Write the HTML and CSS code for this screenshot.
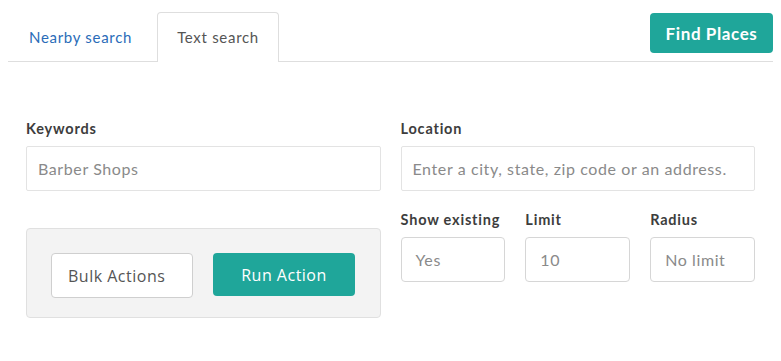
FILE: index.html
```html
<!DOCTYPE html>
<html lang="en">
<head>
<meta charset="utf-8">
<title>Find Places</title>
<link rel="stylesheet" href="styles.css">
</head>
<body>
<div class="page">
  <div class="tabbar">
    <ul class="tabs">
      <li class="tab"><a href="#">Nearby search</a></li>
      <li class="tab active"><a href="#">Text search</a></li>
    </ul>
    <button class="btn-find" type="button">Find Places</button>
  </div>

  <div class="form">
    <div class="col">
      <div class="field">
        <label class="label">Keywords</label>
        <div class="input"><span class="ph">Barber Shops</span></div>
      </div>
      <div class="actions">
        <div class="select">Bulk Actions</div>
        <button class="btn-run" type="button">Run Action</button>
      </div>
    </div>
    <div class="col">
      <div class="field">
        <label class="label">Location</label>
        <div class="input"><span class="ph">Enter a city, state, zip code or an address.</span></div>
      </div>
      <div class="trio">
        <div class="field">
          <label class="label">Show existing</label>
          <div class="input small"><span class="ph">Yes</span></div>
        </div>
        <div class="field">
          <label class="label">Limit</label>
          <div class="input small"><span class="ph">10</span></div>
        </div>
        <div class="field">
          <label class="label">Radius</label>
          <div class="input small"><span class="ph">No limit</span></div>
        </div>
      </div>
    </div>
  </div>
</div>
</body>
</html>
```
FILE: styles.css
```css
* { box-sizing: border-box; }
body {
  margin: 8px;
  background: #fff;
  font-family: Lato, "Noto Sans", sans-serif;
  color: #444;
}
.tabbar {
  display: flex;
  justify-content: space-between;
  align-items: flex-start;
  border-bottom: 1px solid #dedede;
  height: 54px;
  padding-top: 5px;
}
.tabs {
  list-style: none;
  margin: 0;
  padding: 0;
  display: flex;
  align-self: flex-end;
}
.tab a {
  display: block;
  height: 49px;
  padding: 0 20px;
  line-height: 49px;
  font-size: 15px;
  letter-spacing: 0.7px;
  color: #2a6cb8;
  text-decoration: none;
  border: 1px solid transparent;
  border-bottom: none;
  border-radius: 4px 4px 0 0;
}
.tab.active a {
  color: #555;
  border-color: #dedede;
  background: #fff;
  margin-bottom: -1px;
  height: 50px;
  padding: 0 19px;
}
.tab + .tab { margin-left: 4px; }
.btn-find {
  background: #1fa69a;
  color: #fff;
  border: none;
  border-radius: 4px;
  height: 40px;
  width: 123px;
  font-family: inherit;
  font-size: 17px;
  font-weight: 700;
  letter-spacing: 0.6px;
  padding: 0;
}
.form {
  display: grid;
  grid-template-columns: 1fr 1fr;
  column-gap: 20px;
  padding: 57px 18px 0;
}
.col { display: flex; flex-direction: column; }
.field { display: flex; flex-direction: column; }
.label {
  font-size: 14.5px;
  font-weight: 700;
  letter-spacing: 0.8px;
  line-height: 20px;
  color: #3d3d3d;
  margin-bottom: 7px;
}
.input {
  height: 45px;
  border: 1px solid #e3e3e3;
  border-radius: 2px;
  display: flex;
  align-items: center;
  padding: 0 11px;
  font-size: 16px;
  letter-spacing: 0.6px;
  color: #8a8a8a;
  background: #fff;
}
.input.small {
  border-color: #d6d6d6;
  border-radius: 4px;
  padding: 0 14px;
}
.trio {
  margin-top: 19px;
  display: grid;
  grid-template-columns: repeat(3, 1fr);
  column-gap: 20px;
}
.actions {
  margin-top: 37px;
  background: #f3f3f3;
  border: 1px solid #e0e0e0;
  border-radius: 4px;
  display: flex;
  gap: 20px;
  align-items: flex-start;
  padding: 24px 24px 19px;
}
.select {
  width: 142px;
  height: 45px;
  background: #fff;
  border: 1px solid #cfcfcf;
  border-radius: 4px;
  display: flex;
  align-items: center;
  padding: 0 16px;
  font-family: "Open Sans", sans-serif;
  font-size: 16px;
  letter-spacing: 0.5px;
  color: #555;
}
.btn-run {
  width: 142px;
  height: 43px;
  background: #1fa69a;
  color: #fff;
  border: none;
  border-radius: 4px;
  font-family: "Open Sans", sans-serif;
  font-size: 16px;
  letter-spacing: 0.5px;
  padding: 0;
}
```
